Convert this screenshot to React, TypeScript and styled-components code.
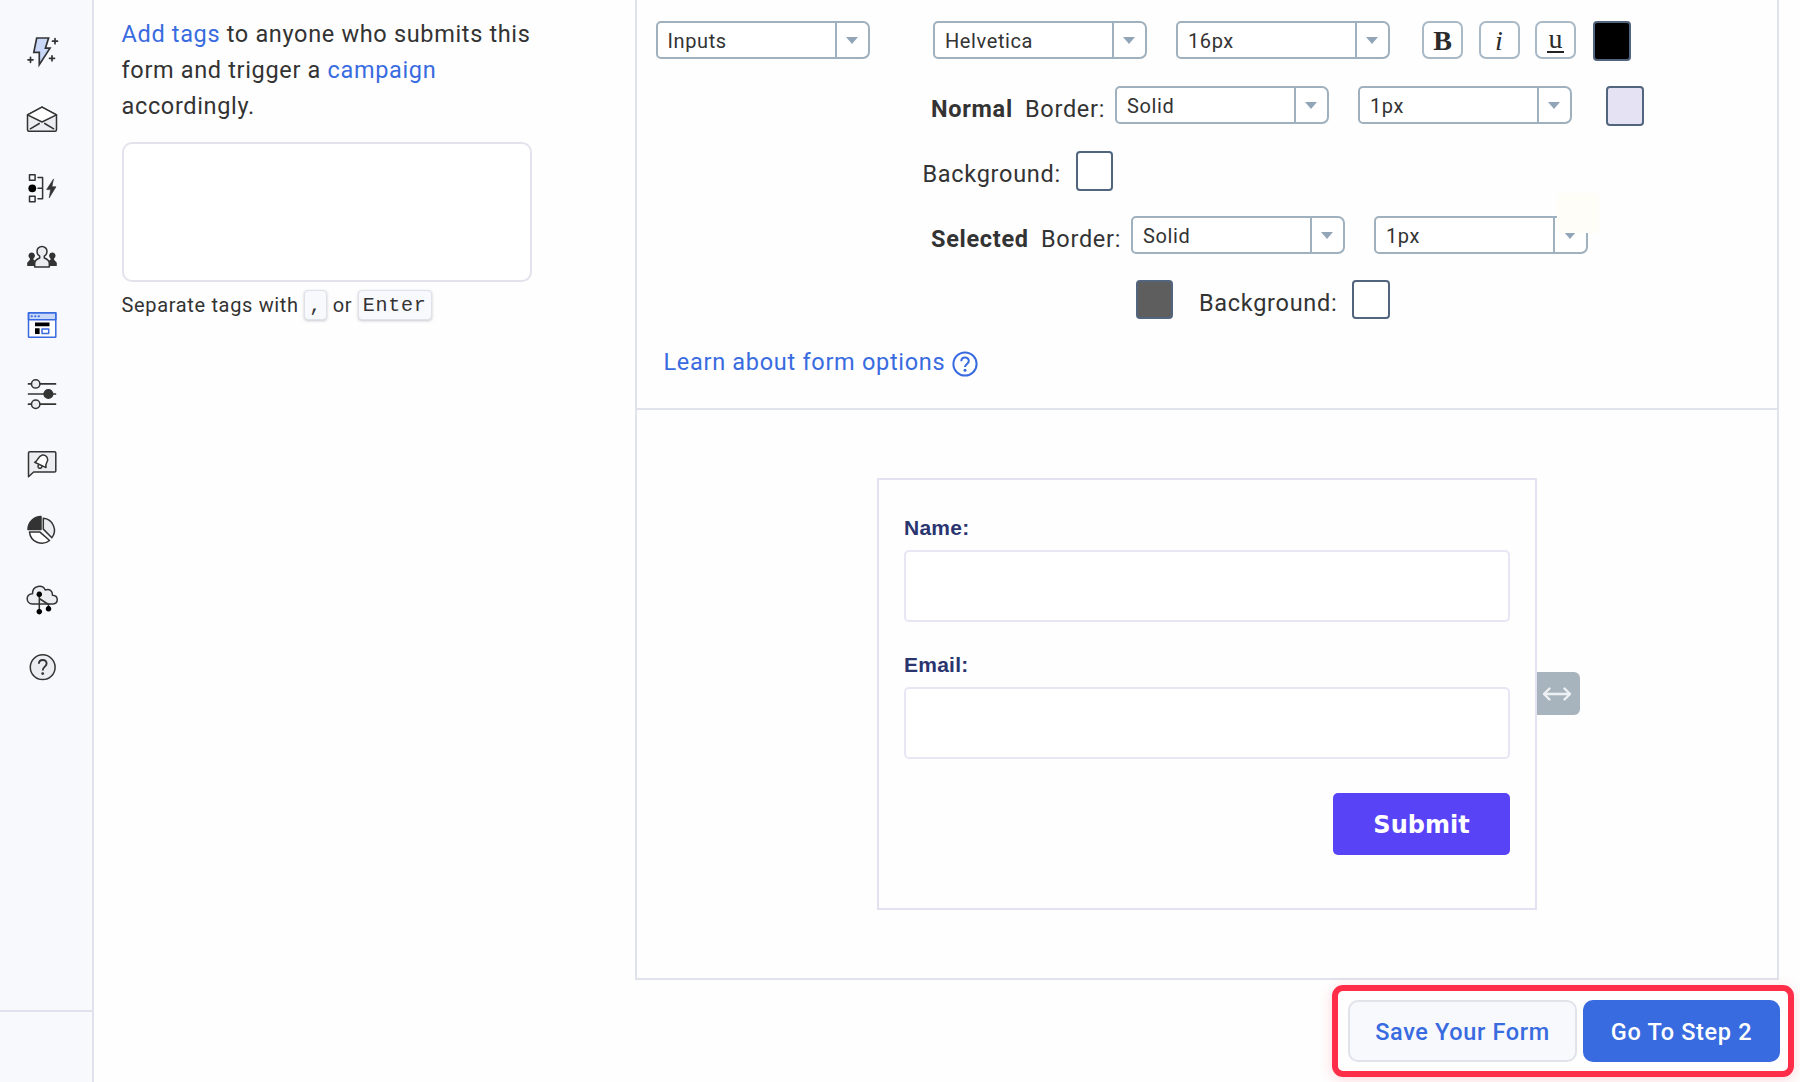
import React from "react";
import styled, { createGlobalStyle, css } from "styled-components";

const ink = "#333333";
const blue = "#396be0";
const line = "#e0e2ec";
const steel = "#9fb0be";

const GlobalStyle = createGlobalStyle`
  * { box-sizing: border-box; }
  body {
    margin: 0;
    background: #fefefe;
    color: ${ink};
    font-family: Roboto, "Liberation Sans", sans-serif;
    overflow: hidden;
  }
`;

const Page = styled.div`
  display: flex;
  width: 1800px;
  height: 1082px;
  overflow: hidden;
`;

const Sidebar = styled.nav`
  display: flex;
  flex-direction: column;
  justify-content: space-between;
  flex: 0 0 94px;
  background: #f8f9fd;
  border-right: 2px solid #e1e2ee;
`;

const IconList = styled.div`
  display: flex;
  flex-direction: column;
  gap: 28.5px;
  padding: 31px 0 0 22px;
`;

const SidebarFoot = styled.div`
  height: 72px;
  border-top: 2px solid #e1e2ee;
`;

const Glyph = styled.svg`
  display: block;
  width: 40px;
  height: 40px;
  fill: none;
  stroke: ${ink};
  stroke-width: 1.5;
  stroke-linejoin: round;
  stroke-linecap: round;

  .accent { stroke: ${blue}; }
`;

const TagsColumn = styled.section`
  flex: 0 0 541px;
  padding: 16px 0 0 27.5px;
`;

const Intro = styled.p`
  margin: 0;
  width: 425px;
  font-size: 23.5px;
  line-height: 36px;
  letter-spacing: 0.66px;
`;

const Link = styled.a`
  color: ${blue};
`;

const TagBox = styled.div`
  width: 410px;
  height: 140px;
  margin-top: 18px;
  background: #fff;
  border: 2px solid #e2e3ec;
  border-radius: 10px;
`;

const Hint = styled.div`
  display: flex;
  align-items: center;
  margin-top: 7px;
  height: 31px;
  font-size: 20px;
  letter-spacing: 0.66px;
`;

const Key = styled.kbd<{ $w: number }>`
  display: flex;
  align-items: center;
  justify-content: center;
  width: ${(p) => p.$w}px;
  height: 30px;
  margin: 0 5.5px;
  padding-top: 2px;
  background: #f8f9fd;
  border: 1px solid #e0e1ea;
  border-radius: 4px;
  box-shadow: 0 1px 3px rgba(60, 60, 90, 0.28);
  font: 20px/26px "Liberation Mono", monospace;
  letter-spacing: 0.75px;
`;

const Main = styled.main`
  display: flex;
  flex-direction: column;
  flex: 1;
`;

const Editor = styled.section`
  width: 1144px;
  height: 980px;
  border: 2px solid ${line};
  border-top: 0;
`;

const Options = styled.div`
  height: 410px;
  padding: 21px 0 0 18.5px;
  border-bottom: 2px solid ${line};
`;

const OptionRow = styled.div<{ $indent?: number; $h?: number }>`
  display: flex;
  height: ${(p) => p.$h || 65}px;
  padding-left: ${(p) => p.$indent || 0}px;
`;

const Select = styled.div<{ $after?: number }>`
  display: grid;
  grid-template-columns: 1fr 33px;
  flex: 0 0 214px;
  height: 38px;
  margin-right: ${(p) => p.$after || 0}px;
  background: #fff;
  border: 2px solid ${steel};
  border-radius: 5px 7px 7px 5px;
`;

const SelectText = styled.span`
  padding-left: 10px;
  font-size: 20px;
  line-height: 36px;
  letter-spacing: 0.6px;
`;

const SelectArrow = styled.span`
  display: flex;
  justify-content: center;
  padding: 13.5px 1px 0 0;
  border-left: 2px solid ${steel};

  &::after {
    content: "";
    width: 0;
    height: 0;
    border: 6px solid transparent;
    border-top: 7px solid #91a5b6;
    border-bottom: 0;
  }
`;

const Label = styled.span<{ $w: number; $bold?: boolean; $inset?: number }>`
  flex: 0 0 ${(p) => p.$w}px;
  padding: 7px 0 0 ${(p) => p.$inset || 0}px;
  font-size: 23.5px;
  line-height: 32px;
  letter-spacing: 0.7px;
  font-weight: ${(p) => (p.$bold ? 700 : 400)};
  white-space: nowrap;
`;

const Swatch = styled.span<{ $color: string }>`
  flex: 0 0 37.5px;
  height: 39.5px;
  background: ${(p) => p.$color};
  border: 2px solid #52657f;
  border-radius: 4px;
`;

const StyleButtons = styled.div`
  display: flex;
  gap: 15.5px;
  margin-right: 17px;
`;

const StyleButton = styled.button<{ $kind: "b" | "i" | "u" }>`
  display: flex;
  align-items: center;
  justify-content: center;
  width: 41px;
  height: 38px;
  padding: 0;
  background: #fff;
  border: 2px solid #a9b9c6;
  border-radius: 7px;
  color: #2b2b2b;
  font: 28px/34px "Liberation Serif", serif;
  ${(p) => p.$kind === "b" && css`font-weight: 700;`}
  ${(p) => p.$kind === "i" && css`font-style: italic;`}

  span {
    display: block;
    padding-top: 1px;
    ${(p) =>
      p.$kind === "u" &&
      css`
        width: 17px;
        height: 23px;
        margin-top: 2px;
        line-height: 15px;
        border-bottom: 2px solid #222;
      `}
  }
`;

const CursorPatch = styled.span`
  position: absolute;
  right: -11px;
  top: -23px;
  width: 42px;
  height: 40px;
  background: #fffdf8;
`;

const SelectHolder = styled.div`
  position: relative;
  flex: 0 0 214px;
`;

const LearnLink = styled.a`
  display: flex;
  align-items: center;
  margin-top: 1.5px;
  padding-left: 8px;
  height: 32px;
  color: ${blue};
  font-size: 23.5px;
  line-height: 32px;
  letter-spacing: 0.7px;

  span { flex: 0 0 288px; white-space: nowrap; }
  svg { display: block; margin-top: 3px; }
`;

const Preview = styled.div`
  display: flex;
  align-items: flex-start;
  padding: 68px 0 0 240px;
`;

const FormCard = styled.form`
  width: 660px;
  height: 432px;
  padding: 32px 25px 0 25px;
  border: 2px solid #e3e2f2;
`;

const FieldLabel = styled.label`
  display: block;
  height: 37px;
  margin-bottom: 1px;
  color: #2a3570;
  font: 700 21px/31px "Liberation Sans", Arial, sans-serif;
  letter-spacing: 0.25px;
`;

const Field = styled.div`
  height: 72px;
  margin-bottom: 27px;
  background: #fff;
  border: 2px solid #e7e6f4;
  border-radius: 5px;
`;

const Submit = styled.button`
  display: block;
  width: 177px;
  height: 62px;
  margin: 34px 0 0 auto;
  padding: 2px 0 0;
  border: 0;
  border-radius: 5px;
  background: #5843f6;
  color: #fff;
  font: 700 24px/60px "DejaVu Sans", Verdana, sans-serif;
`;

const ResizeHandle = styled.div`
  display: flex;
  align-items: center;
  justify-content: center;
  width: 43px;
  height: 43px;
  margin-top: 194px;
  padding-right: 3px;
  background: #a8b4bd;
  border-radius: 0 6px 6px 0;
`;

const Actions = styled.div`
  display: flex;
  gap: 6px;
  align-self: flex-end;
  width: 462px;
  height: 92px;
  margin: 5px 6px 0 0;
  padding: 9px 0 0 10px;
  border: 6px solid #ff2d48;
  border-radius: 11px;
  box-shadow: 0 3px 14px rgba(255, 45, 72, 0.18);
`;

const ActionButton = styled.button<{ $primary?: boolean; $w: number }>`
  flex: 0 0 ${(p) => p.$w}px;
  height: 62px;
  padding: 0;
  border: 2px solid ${(p) => (p.$primary ? "#396be0" : "#e1e3eb")};
  border-radius: 10px;
  background: ${(p) => (p.$primary ? "#396be0" : "#f8f9fd")};
  color: ${(p) => (p.$primary ? "#fff" : blue)};
  font: 500 23.5px/60px Roboto, sans-serif;
  letter-spacing: 0.64px;
`;

function Dropdown({ value, after }: { value: string; after?: number }) {
  return (
    <Select $after={after}>
      <SelectText>{value}</SelectText>
      <SelectArrow />
    </Select>
  );
}

function SidebarIcons() {
  const pale = "#ecedf0";
  return (
    <IconList>
      <Glyph viewBox="0 0 40 40">
        <path d="M14.7 7H26.6L23.4 17.2H28L17.3 33.6V21.4H11.8Z" fill="#c9d8f8" strokeWidth="1.7" strokeLinejoin="miter" />
        <path d="M33 7.7v5M30.5 10.2h5M30 24.8v5M27.5 27.3h5M8.5 26.3v5M6 28.8h5" strokeWidth="1.7" />
      </Glyph>
      <Glyph viewBox="0 0 40 40">
        <path d="M5.5 14.8L20 7.1L34.5 14.8V29.8a1.5 1.5 0 0 1-1.5 1.5H7A1.5 1.5 0 0 1 5.5 29.8Z" fill={pale} />
        <path d="M5.5 14.8L20 7.1L34.5 14.8L20 22Z" fill="#fff" />
        <path d="M8.3 28.8L17.3 23.5M31.7 28.8L22.7 23.5" />
      </Glyph>
      <Glyph viewBox="0 0 40 40">
        <rect x="7.5" y="6.7" width="5.6" height="5.6" />
        <rect x="7.5" y="28.2" width="5.6" height="5.6" />
        <circle cx="10.3" cy="20.3" r="3.9" fill="#000" stroke="none" />
        <path d="M16 9.4h4.6v21.4H16M16 20.2h4.6" />
        <path d="M31.4 11.2L24.6 21.6H28.6L27.2 30L34 18.7H30.1Z" fill={ink} strokeWidth="0.6" />
      </Glyph>
      <Glyph viewBox="0 0.5 40 40">
        <path d="M9.7 15.9a3.3 3.3 0 0 1 1.8 6v1.4l2.6 1.4v4.7H5.2v-3.2l2.7-2.9v-1.4a3.3 3.3 0 0 1 1.8-6ZM30.3 15.9a3.3 3.3 0 0 1 1.8 6v1.4l2.7 2.9v3.2h-8.9v-4.7l2.6-1.4v-1.4a3.3 3.3 0 0 1 1.8-6Z" fill={ink} stroke="none" />
        <path d="M17.7 19.7c-2-1.2-2.7-2.9-2.7-4.8a5 5 0 0 1 10 0c0 1.9-.7 3.6-2.7 4.8v1.8c3.5 1.2 5 2.5 5 5.6v3.4H12.7v-3.4c0-3.1 1.5-4.4 5-5.6Z" fill={pale} />
      </Glyph>
      <Glyph viewBox="0 0 40 40">
        <rect x="6.5" y="7.7" width="27.3" height="24.6" fill="#fff" stroke="none" />
        <rect className="accent" x="6.5" y="7.7" width="27.3" height="7" fill="#cad8f7" />
        <rect className="accent" x="6.5" y="7.7" width="27.3" height="24.6" rx="0.5" />
        <path className="accent" d="M9.7 11.2h.2M13.2 11.2h.2M16.7 11.2h.2" strokeWidth="2" />
        <path d="M13 17.5h14.5v3.8H13ZM13 23.3h4.6v5.8H13Z" fill="#000" stroke="none" />
        <rect className="accent" x="20" y="24" width="6.7" height="4.4" />
      </Glyph>
      <Glyph viewBox="0 0 40 40">
        <path d="M6.5 9.9h27M6.5 20h27M6.5 30.2h27" strokeWidth="1.7" />
        <circle cx="13.7" cy="9.9" r="4.2" fill={pale} />
        <circle cx="26.4" cy="20" r="4.3" fill={ink} />
        <circle cx="13.7" cy="30.2" r="4.2" fill={pale} />
      </Glyph>
      <Glyph viewBox="0 0 40 40">
        <path d="M6.5 34.8V11.1q0-1.3 1.3-1.3h24.7q1.3 0 1.3 1.3v17.9q0 1-1.2 1H11.6Z" fill={pale} />
        <path d="M12.7 20.3C16 19.2 15.7 13.9 20.4 13c4.2-.6 6.6 3.9 4.4 7.3-1.3 2-1.1 3.2-.8 5.3Z" fill="#fff" />
        <path d="M16.5 23a2 2 0 1 0 3.5 1.3" />
      </Glyph>
      <Glyph viewBox="0 0.5 40 40">
        <path d="M19 18.9V6A13.1 13.1 0 0 0 6 18.9Z" fill={ink} />
        <path d="M21.3 7.8V18.6L29.8 27.2A12 12 0 0 0 21.3 7.8Z" fill={pale} />
        <path d="M7.5 21.6H18L27.6 30A12.4 12.4 0 0 1 7.5 21.6Z" fill="#fff" />
      </Glyph>
      <Glyph viewBox="0 0 40 40">
        <path d="M10.5 25C3.5 24.6 3.3 14.6 10.5 14.7C10.5 6.5 20.6 5.2 23.2 11C27.5 9.2 30.7 12 30.5 16.2C36.8 16.4 36.6 24.7 31 25Z" fill={pale} />
        <path d="M17.3 15.3V32.5M17.3 19.5L26.5 25.5V29.5" />
        <path d="M17.3 12.5a2.8 2.8 0 1 0 .01 0ZM17.3 29.9a2.8 2.8 0 1 0 .01 0ZM26.5 27a2.8 2.8 0 1 0 .01 0Z" fill="#000" stroke="none" />
      </Glyph>
      <Glyph viewBox="0 0 40 40">
        <circle cx="20.7" cy="19.2" r="12.4" fill={pale} />
        <path d="M16.9 15.8c0-5 7.7-5 7.7-.3 0 3.2-3.9 3.2-3.9 7.1" strokeWidth="1.9" strokeLinecap="butt" />
        <circle cx="20.7" cy="25.6" r="1.4" fill={ink} stroke="none" />
      </Glyph>
    </IconList>
  );
}

export default function App() {
  return (
    <Page>
      <GlobalStyle />
      <Sidebar>
        <SidebarIcons />
        <SidebarFoot />
      </Sidebar>

      <TagsColumn>
        <Intro>
          <Link>Add tags</Link> <span>to anyone who submits this</span>{" "}
          <span>form and trigger a</span> <Link>campaign</Link>{" "}
          <span>accordingly.</span>
        </Intro>
        <TagBox />
        <Hint>
          Separate tags with <Key $w={23}>,</Key> or <Key $w={74}>Enter</Key>
        </Hint>
      </TagsColumn>

      <Main>
        <Editor>
          <Options>
            <OptionRow>
              <Dropdown value="Inputs" after={63.5} />
              <Dropdown value="Helvetica" after={29} />
              <Dropdown value="16px" after={32} />
              <StyleButtons>
                <StyleButton $kind="b"><span>B</span></StyleButton>
                <StyleButton $kind="i"><span>i</span></StyleButton>
                <StyleButton $kind="u"><span>u</span></StyleButton>
              </StyleButtons>
              <Swatch $color="#000" />
            </OptionRow>
            <OptionRow $indent={275.5}>
              <Label $w={94} $bold>Normal</Label>
              <Label $w={90}>Border:</Label>
              <Dropdown value="Solid" after={29} />
              <Dropdown value="1px" after={34} />
              <Swatch $color="#e5e3f3" />
            </OptionRow>
            <OptionRow $indent={267}>
              <Label $w={153}>Background:</Label>
              <Swatch $color="#fff" />
            </OptionRow>
            <OptionRow $indent={275.5} $h={63.5}>
              <Label $w={110} $bold>Selected</Label>
              <Label $w={90}>Border:</Label>
              <Dropdown value="Solid" after={29} />
              <SelectHolder>
                <Dropdown value="1px" />
                <CursorPatch />
              </SelectHolder>
            </OptionRow>
            <OptionRow $indent={480}>
              <Swatch $color="#5e5e5e" />
              <Label $w={179} $inset={26}>Background:</Label>
              <Swatch $color="#fff" />
            </OptionRow>
            <LearnLink>
              <span>Learn about form options</span>
              <svg width="26" height="26" viewBox="0 0 26 26" fill="none" stroke={blue} strokeWidth="2">
                <circle cx="13" cy="13" r="11.6" />
                <path d="M9.3 10.3c0-5 7.5-4.9 7.5-.4 0 3-3.8 3.1-3.8 6.2" />
                <circle cx="13" cy="19.3" r="1.5" fill={blue} stroke="none" />
              </svg>
            </LearnLink>
          </Options>
          <Preview>
            <FormCard>
              <FieldLabel>Name:</FieldLabel>
              <Field />
              <FieldLabel>Email:</FieldLabel>
              <Field />
              <Submit type="button">Submit</Submit>
            </FormCard>
            <ResizeHandle>
              <svg width="30" height="16" viewBox="0 0 30 16" fill="none" stroke="#eef1f3" strokeWidth="2.4" strokeLinejoin="round" strokeLinecap="round">
                <path d="M2 8H28M7.5 2.5L2 8L7.5 13.5M22.5 2.5L28 8L22.5 13.5" />
              </svg>
            </ResizeHandle>
          </Preview>
        </Editor>
        <Actions>
          <ActionButton $w={229}>Save Your Form</ActionButton>
          <ActionButton $w={197} $primary>Go To Step 2</ActionButton>
        </Actions>
      </Main>
    </Page>
  );
}
